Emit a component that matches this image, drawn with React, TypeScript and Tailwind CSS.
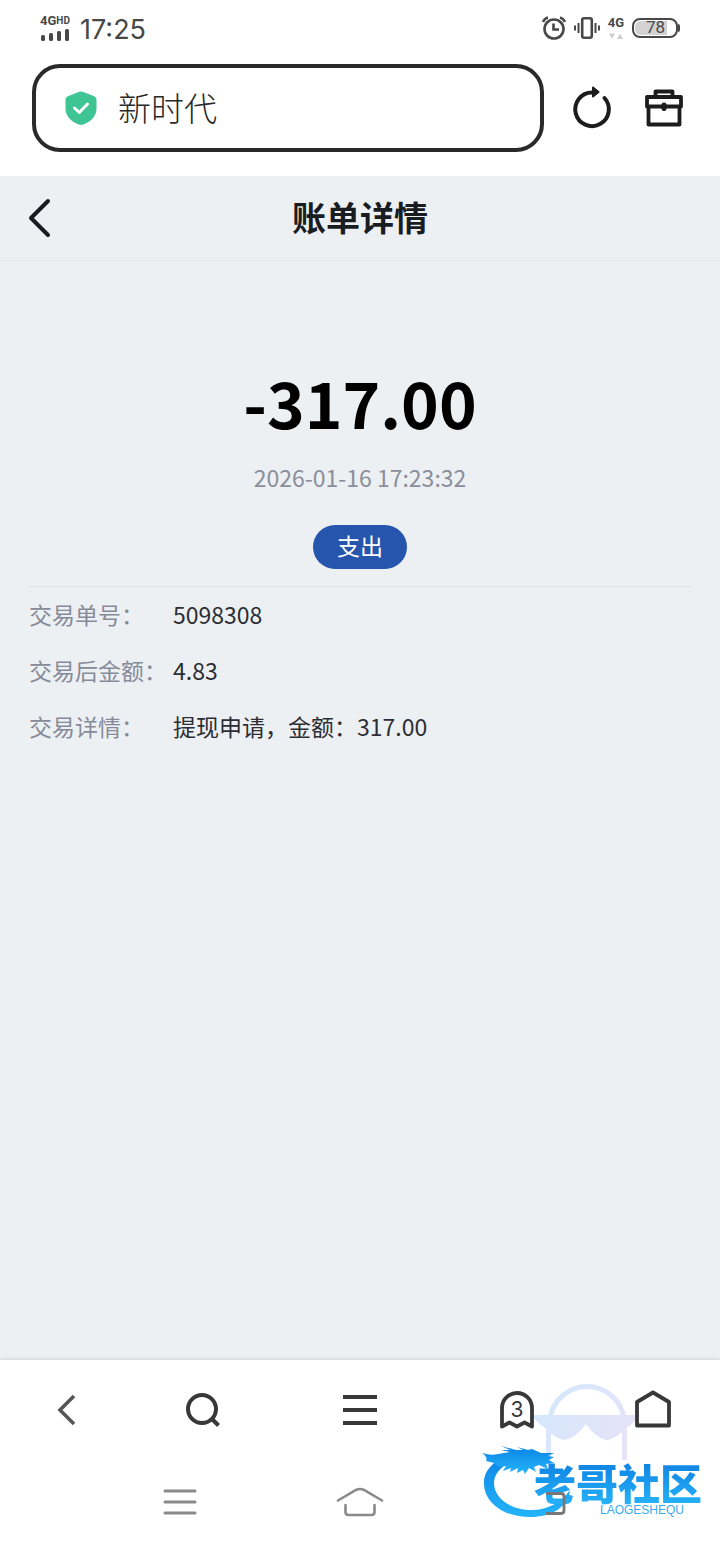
import type { ReactNode } from 'react'

const details = [
  { label: '交易单号：', value: '5098308' },
  { label: '交易后金额：', value: '4.83' },
  { label: '交易详情：', value: '提现申请，金额：317.00' }
]

function StatusBar() {
  return (
    <div className="flex h-14 items-center justify-between px-10 text-[#484848]">
      <div className="flex items-center gap-2.5">
        <div className="flex flex-col gap-px">
          <div className="flex items-start font-['Roboto',sans-serif] font-bold leading-none">
            <span className="text-[13px] leading-3">4G</span>
            <span className="text-[10px] leading-3">HD</span>
          </div>
          <svg width="30" height="14" viewBox="0 0 30 14" fill="currentColor" aria-hidden="true">
            <rect x="1" y="7" width="4" height="6" rx="1.5" />
            <rect x="9" y="5" width="4" height="8" rx="1.5" />
            <rect x="17" y="3" width="4" height="10" rx="1.5" />
            <rect x="25" y="1" width="4" height="12" rx="1.5" />
          </svg>
        </div>
        <span className="pt-1 text-[27px] leading-8">17:25</span>
      </div>
      <div className="flex items-center gap-2">
        <svg width="26" height="26" viewBox="0 0 26 26" fill="none" stroke="currentColor" strokeWidth="2.6" aria-hidden="true">
          <circle cx="14" cy="14" r="9.5" />
          <path d="M13.500 8.500v6h5.500" />
          <path d="M3 7q1.500-3.500 5-4.500M25 7q-1.500-3.500-5-4.500" />
        </svg>
        <svg width="26" height="24" viewBox="0 0 26 24" fill="none" stroke="currentColor" aria-hidden="true">
          <rect x="8.200" y="2.200" width="9.600" height="19.600" rx="2" strokeWidth="2.600" />
          <path d="M4.500 7v10M21.500 7v10M1 9.500v5M25 9.500v5" strokeWidth="2" />
        </svg>
        <div className="flex flex-col items-center gap-1">
          <span className="font-['Roboto',sans-serif] text-[13px] font-bold leading-3">4G</span>
          <svg width="14" height="7" viewBox="0 0 14 7" fill="#cfcfcf" aria-hidden="true">
            <path d="M0 .5h6L3 6zM8 6h6L11 .5z" />
          </svg>
        </div>
        <div className="flex items-center">
          <div className="flex h-5 w-[46px] items-center rounded-lg border-2 border-[#484848] p-px">
            <div className="flex h-full w-8 items-center justify-end rounded-l-md bg-[#d2d2d2] pr-0.5 font-['Roboto',sans-serif] text-[17px]">
              78
            </div>
          </div>
          <span className="h-2 w-0.5 rounded-r bg-[#484848]" />
        </div>
      </div>
    </div>
  )
}

function AddressBar() {
  return (
    <div className="flex items-center gap-6 px-8 pb-6 pt-2">
      <button className="flex h-22 flex-1 items-center gap-5 rounded-[28px] border-4 border-[#2a2a2a] px-7 text-left text-[33px] font-light leading-10 text-[#2a2a2a]">
        <svg width="34" height="36" viewBox="0 0 34 36" aria-hidden="true">
          <path
            d="M17 1.500c1 0 2 .3 3 .8l9 3.400c2.200.8 3.500 2 3.500 4.300v8.500c0 7.500-5.500 13-12.500 15.700-2 .8-4 .8-6 0C7 31.500 1.500 26 1.500 18.500V10c0-2.300 1.300-3.500 3.500-4.300l9-3.400c1-.5 2-.8 3-.8z"
            fill="#3fc495"
          />
          <path d="M10.500 18l4.800 4.500 8.200-8.500" fill="none" stroke="#fff" strokeWidth="3" strokeLinecap="round" strokeLinejoin="round" />
        </svg>
        <span className="pt-0.5">新时代</span>
      </button>
      <button aria-label="刷新">
        <svg width="48" height="48" viewBox="0 0 48 48" fill="none" stroke="#1c1c1c" strokeWidth="4" strokeLinecap="round" aria-hidden="true">
          <path d="M24 8.500a16.800 16.800 0 1 0 12.500 5.500" />
          <path d="M25 3.500l5.500 4.500-5.500 4.500z" fill="#1c1c1c" strokeWidth="2" strokeLinejoin="round" />
        </svg>
      </button>
      <button aria-label="工具箱" className="flex w-12 justify-center">
        <svg width="40" height="40" viewBox="0 0 40 40" fill="none" stroke="#1c1c1c" strokeWidth="3.800" strokeLinejoin="round" aria-hidden="true">
          <path d="M11.500 8.500V3.500h17v5M3 9h34v9.500H3zM4.500 18.500V36.500h31v-18" />
          <path d="M20 17v3.500" strokeWidth="5" strokeLinecap="round" />
        </svg>
      </button>
    </div>
  )
}

function ToolButton({ label, children }: { label: string; children: ReactNode }) {
  return (
    <button aria-label={label} className="flex h-12 items-center justify-center">
      {children}
    </button>
  )
}

function Watermark() {
  return (
    <div className="pointer-events-none absolute bottom-6 right-4 h-[136px] w-56">
      <svg className="absolute inset-0" width="224" height="136" viewBox="0 0 224 136" aria-hidden="true">
        <defs>
          <linearGradient id="hat" gradientUnits="userSpaceOnUse" x1="60" y1="10" x2="150" y2="75">
            <stop offset="0" stopColor="#d3e8fc" />
            <stop offset="1" stopColor="#e9e2f8" />
          </linearGradient>
          <linearGradient id="dragon" x1="0" y1="0" x2="0" y2="1">
            <stop offset="0" stopColor="#0b84e4" />
            <stop offset="1" stopColor="#24b4fa" />
          </linearGradient>
        </defs>
        <g fill="none" stroke="url(#hat)" strokeWidth="5">
          <path d="M70 34A37.500 37.500 0 0 1 144 34M68.500 45v30M144.500 45v31" />
          <path d="M52 31h108q-6 8-12 12-14 13-22 13-10-2-20-16-10 14-21 16-8 0-20-12-8-5-13-13z" fill="url(#hat)" stroke="none" />
        </g>
        <g fill="url(#dragon)">
          <path d="M36 70C18 73 4 84 4 99c0 20 20 34 46 34 22 0 38-10 40-27-8 12-22 20-38 20-22 0-38-12-38-27 0-10 9-19 24-24z" />
          <path d="M2 69q9 3 16 1l12-2-9-2 9 0-9-4 15 4 7 0-6-3 11 3 4-1 9 4 13 0-6 3 6 1-5 3 5 3-8 1 2 5-9-4-5 2 2 5-7-4-4 6-2-4-6 3 1-5-8 4 1-4-8 3 3-5-7 1-5-4-8-2Q8 73 2 69z" />
        </g>
      </svg>
      <span className="absolute bottom-3.5 right-0.5 bg-linear-to-b from-[#0f7fe0] to-[#27b3f8] bg-clip-text font-['Noto_Sans_CJK_SC',sans-serif] text-[42px] font-black leading-12 text-transparent">
        老哥社区
      </span>
      <span className="absolute bottom-1 right-5 font-['Liberation_Sans',sans-serif] text-xs leading-3 text-[#3aaaf0]">
        LAOGESHEQU
      </span>
    </div>
  )
}

function BottomBars() {
  return (
    <footer className="relative bg-white shadow-[0_-1px_3px_rgba(0,0,0,0.12)]">
      <Watermark />
      <nav className="relative grid h-25 grid-cols-[134fr_138fr_176fr_138fr_134fr] items-center">
        <ToolButton label="后退">
          <svg width="20" height="32" viewBox="0 0 20 32" fill="none" stroke="#555" strokeWidth="3.600" aria-hidden="true">
            <path d="M17 2 3 16l14 14" />
          </svg>
        </ToolButton>
        <ToolButton label="搜索">
          <svg width="36" height="36" viewBox="0 0 36 36" fill="none" stroke="#383838" strokeWidth="4" aria-hidden="true">
            <circle cx="17" cy="17" r="14" />
            <path d="M26.500 26.500l7 7" />
          </svg>
        </ToolButton>
        <ToolButton label="菜单">
          <svg width="34" height="32" viewBox="0 0 34 32" stroke="#383838" strokeWidth="4" aria-hidden="true">
            <path d="M0 3h34M0 16h34M0 29h34" />
          </svg>
        </ToolButton>
        <ToolButton label="标签页 3">
          <svg width="36" height="40" viewBox="0 0 36 40" fill="none" stroke="#383838" strokeWidth="3.800" strokeLinejoin="round" aria-hidden="true">
            <path d="M3 36.500V18a15 15 0 0 1 30 0v18.500l-7.500-4-7.500 4-7.500-4z" />
            <text x="18" y="27" textAnchor="middle" fontSize="21" fill="#383838" stroke="none">3</text>
          </svg>
        </ToolButton>
        <ToolButton label="主页">
          <svg width="36" height="40" viewBox="0 0 36 40" fill="none" stroke="#383838" strokeWidth="3.800" strokeLinejoin="round" aria-hidden="true">
            <path d="M18 2.500 34 12v23.500H2V12z" />
          </svg>
        </ToolButton>
      </nav>
      <div className="relative grid h-[84px] grid-cols-3 items-start px-[90px] pt-[18px]">
        <ToolButton label="最近任务">
          <svg width="34" height="28" viewBox="0 0 34 28" stroke="#8a8a8a" strokeWidth="3" strokeLinecap="round" aria-hidden="true">
            <path d="M2 3h30M2 14h30M2 25h30" />
          </svg>
        </ToolButton>
        <ToolButton label="桌面">
          <svg width="48" height="32" viewBox="0 0 48 32" fill="none" stroke="#8a8a8a" strokeWidth="2.600" strokeLinecap="round" aria-hidden="true">
            <path d="M2 14.500 20 4q4-2 8 0l18 10.500M9.500 19v7q0 3 3 3h23q3 0 3-3v-7" />
          </svg>
        </ToolButton>
        <ToolButton label="返回">
          <svg width="52" height="32" viewBox="0 0 52 32" fill="none" stroke="#777" strokeWidth="2.800" aria-hidden="true">
            <path d="M32 7.500h15q3 0 3 3v14q0 3-3 3H32" />
          </svg>
        </ToolButton>
      </div>
    </footer>
  )
}

export default function App() {
  return (
    <div className="flex min-h-screen flex-col bg-[#ecf0f3] font-['Inter','Noto_Sans_CJK_SC',sans-serif]">
      <header className="bg-white">
        <StatusBar />
        <AddressBar />
      </header>

      <main className="flex-1 font-['Noto_Sans_CJK_SC',sans-serif] text-[23px] leading-8">
        <div className="grid h-[85px] grid-cols-[48px_1fr_48px] items-center border-b border-[#e5e9ec] px-[15px] text-[#191d22]">
          <button aria-label="返回" className="flex justify-center">
            <svg width="26" height="40" viewBox="0 0 26 40" fill="none" stroke="currentColor" strokeWidth="4" strokeLinecap="round" strokeLinejoin="round" aria-hidden="true">
              <path d="M22 3 5 20l17 17" />
            </svg>
          </button>
          <h1 className="pb-0.5 text-center text-[34px] font-bold leading-12">账单详情</h1>
        </div>

        <section className="mx-[29px] flex flex-col items-center border-b border-[#dde1e5] pb-[17px] pt-26">
          <p className="text-[64px] font-bold leading-[72px] text-black">-317.00</p>
          <p className="mt-6 text-[#8b8e9b]">2026-01-16 17:23:32</p>
          <span className="mt-8 rounded-full bg-[#2555ad] px-6 pb-2 pt-1 text-white">支出</span>
        </section>

        <dl className="mx-[29px]">
          {details.map((item) => (
            <div key={item.label} className="flex h-14 items-center pb-0.5">
              <dt className="w-36 shrink-0 text-[#868a99]">{item.label}</dt>
              <dd className="text-[#2c2e33]">{item.value}</dd>
            </div>
          ))}
        </dl>
      </main>

      <BottomBars />
    </div>
  )
}
